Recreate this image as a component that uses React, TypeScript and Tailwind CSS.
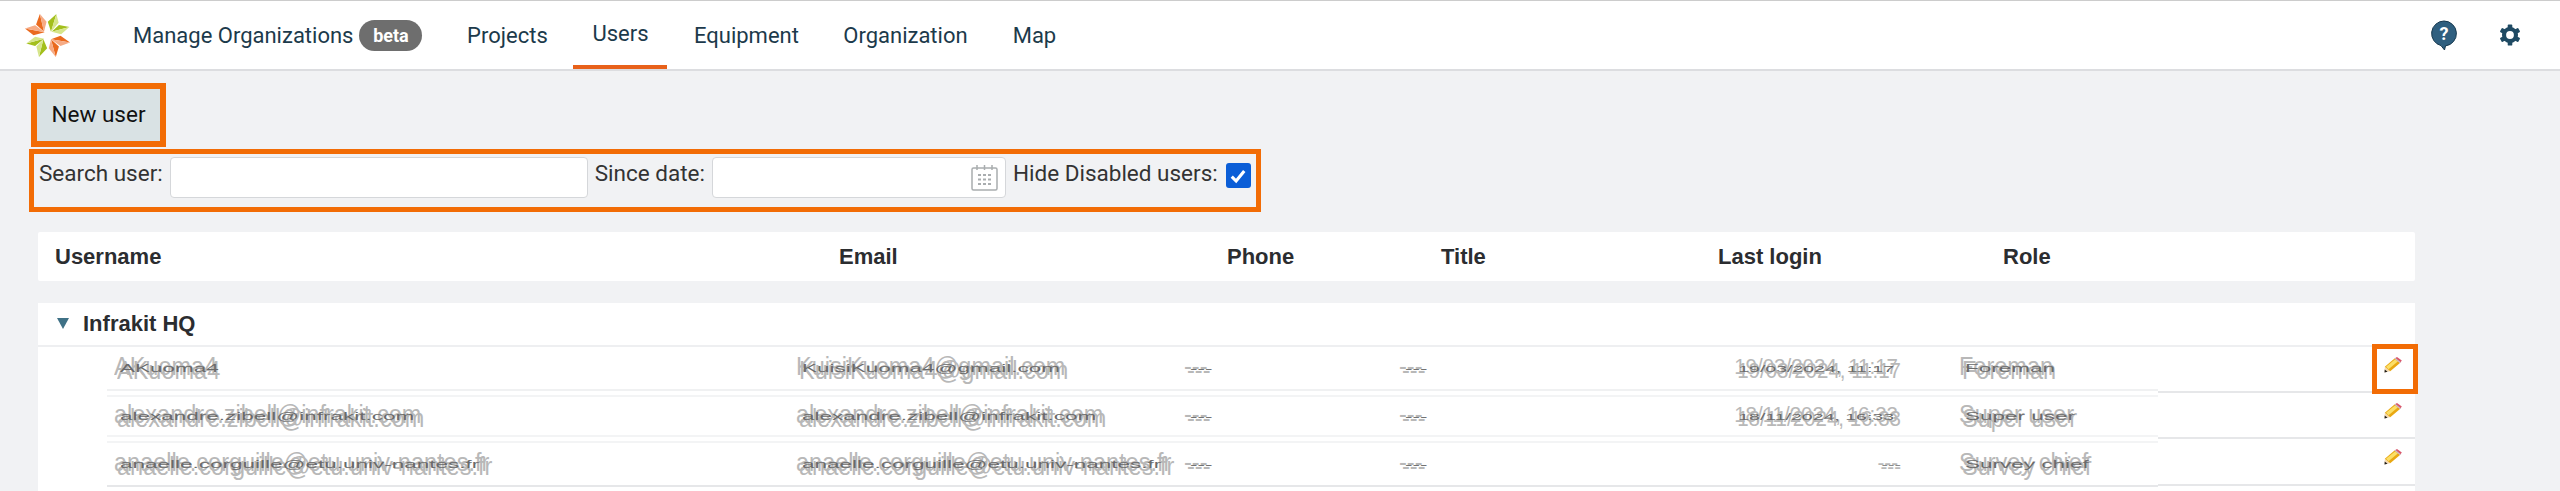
import React from 'react';

const petals = [
  // orange
  { apex: '120,47', inner: '133,103', dark: '108,80', light: '141,72', a: '#ea6a1f', b: '#f6ab85' },
  { apex: '73,93', inner: '135,105', dark: '100,114', light: '105,83', a: '#ea6a1f', b: '#f6ab85' },
  { apex: '170,183', inner: '155,127', dark: '180,150', light: '148,155', a: '#ea6a1f', b: '#f6ab85' },
  { apex: '215,137', inner: '155,127', dark: '185,116', light: '185,148', a: '#ea6a1f', b: '#f6ab85' },
  // green
  { apex: '172,47', inner: '155,103', dark: '145,72', light: '179,75', a: '#a3bf1c', b: '#d6e58a' },
  { apex: '213,88', inner: '157,103', dark: '180,82', light: '187,111', a: '#a3bf1c', b: '#d6e58a' },
  { apex: '77,140', inner: '133,125', dark: '105,148', light: '105,119', a: '#a3bf1c', b: '#d6e58a' },
  { apex: '117,183', inner: '131,127', dark: '143,155', light: '109,150', a: '#a3bf1c', b: '#d6e58a' },
];

const Logo = () => (
  <svg viewBox="70 44 148 142" className="w-[47px] h-[47px]">
    {petals.map((p, i) => (
      <g key={i}>
        <polygon points={`${p.apex} ${p.inner} ${p.dark}`} fill={p.a} />
        <polygon points={`${p.apex} ${p.inner} ${p.light}`} fill={p.b} />
      </g>
    ))}
  </svg>
);

const HelpIcon = () => (
  <svg viewBox="0 0 26 30" className="w-[26px] h-[30px]">
    <path d="M13 1a12.5 12.5 0 0 0-3 24.6L13.500 30l1-4.100A12.500 12.500 0 0 0 13 1z" fill="#2f5f7f" stroke="#16384e" strokeWidth="1" />
    <text x="13" y="20" textAnchor="middle" fill="#fff" fontSize="18" fontWeight="700" fontFamily="Roboto, sans-serif">?</text>
  </svg>
);

const GearIcon = () => (
  <svg viewBox="0 0 24 24" className="w-[22px] h-[22px]">
    <circle cx="12" cy="12" r="6.500" fill="none" stroke="#1f4a63" strokeWidth="4.500" />
    {[0, 60, 120, 180, 240, 300].map((r) => (
      <rect key={r} x="9.500" y="0.500" width="5" height="5" rx="1" fill="#1f4a63" transform={`rotate(${r} 12 12)`} />
    ))}
  </svg>
);

const Pencil = () => (
  <svg viewBox="0 0 18 16" className="w-[18px] h-[16px]">
    <polygon points="0.500,15.500 0.800,9.800 6.200,14.200" fill="#f4d9b0" />
    <polygon points="0.500,15.500 0.700,12.500 3.500,14.800" fill="#1d1d1d" />
    <polygon points="0.800,9.800 10.500,1.500 16,6 6.200,14.200" fill="#e9a812" />
    <polygon points="2,9.800 11.300,2.200 14,4.300 4.500,12.200" fill="#fbdf68" />
    <polygon points="10.500,1.500 13,0 17.800,3.500 16,6" fill="#d9566b" />
    <polygon points="10.500,1.500 11.500,0.900 16.800,5.200 16,6" fill="#c9c9c9" />
  </svg>
);

const CalendarIcon = () => (
  <svg viewBox="0 0 27 27" className="w-[27px] h-[27px]" fill="none" stroke="#a9adaf">
    <rect x="1" y="4" width="25" height="22" rx="1.500" strokeWidth="1.500" />
    <path d="M6 1v5M13.500 1v5M21 1v5" strokeWidth="1.500" />
    <path d="M7 11h3M12 11h3M17 11h3M7 15.500h3M12 15.500h3M17 15.500h3M7 20h3M12 20h3M17 20h3" strokeWidth="2" />
  </svg>
);

// the source shot has these values scrambled: two pale copies and a dark squashed one on top
const Scrambled = ({ text, narrow }: { text: string; narrow?: boolean }) => (
  <span className={narrow
    ? "relative inline-block whitespace-nowrap font-['Liberation_Sans',sans-serif] text-[20.500px] leading-[24px] text-[#b8b8b8]"
    : "relative inline-block whitespace-nowrap font-['Liberation_Sans',sans-serif] text-[23.500px] leading-[24px] text-[#b8b8b8]"}>
    <span className="relative -top-[1px] inline-block scale-y-[1.1]">{text}</span>
    <span aria-hidden className="absolute left-[3px] top-[3px] scale-y-[1.1]">{text}</span>
    <span aria-hidden className={narrow
      ? "absolute left-[4px] top-[1px] text-[#6a6a6a] text-[19.500px] scale-y-[0.5] origin-center"
      : "absolute left-[6px] top-[1px] text-[#6a6a6a] text-[22.500px] scale-y-[0.5] origin-center"}>{text}</span>
  </span>
);

const columns = [
  { label: 'Username', width: 'w-[784px]' },
  { label: 'Email', width: 'w-[388px]' },
  { label: 'Phone', width: 'w-[214px]' },
  { label: 'Title', width: 'w-[277px]' },
  { label: 'Last login', width: 'w-[285px]' },
  { label: 'Role', width: 'w-[60px]' },
];

const users = [
  { name: 'AKuoma4', email: 'KuisiKuoma4@gmail.com', login: '19/03/2024, 11:17', role: 'Foreman', left: 'h-[44px] border-b-2 border-[#f0f1f2]', right: 'h-[46px]' },
  { name: 'alexandre.zibell@infrakit.com', email: 'alexandre.zibell@infrakit.com', login: '18/11/2024, 16:33', role: 'Super user', left: 'mt-[4px] h-[42px] border-y-2 border-[#f3f4f5]', right: 'h-[46px]' },
  { name: 'anaelle.corguille@etu.univ-nantes.fr', email: 'anaelle.corguille@etu.univ-nantes.fr', login: '---', role: 'Survey chief', left: 'mt-[4px] h-[46px] border-y-2 border-t-[#f3f4f5] border-b-[#e6e7e9]', right: 'h-[47px]' },
];

const navItems = [
  { label: 'Projects', width: 'w-[132px]' },
  { label: 'Users', width: 'w-[94px] border-b-4 border-[#e8611a] -mb-[2px]' },
  { label: 'Equipment', width: 'w-[158px]' },
  { label: 'Organization', width: 'w-[160px]' },
  { label: 'Map', width: 'w-[98px]' },
];

const App = () => {
  return (
    <div className="h-[491px] overflow-hidden bg-[#f1f2f4] font-['Roboto',sans-serif] text-[#333]">
      {/* Top navigation */}
      <header className="h-[71px] bg-white border-t border-[#ccc] border-b-2 border-b-[#dcdde0] flex items-center pl-[24px] pr-[39px]">
        <Logo />
        <nav className="flex items-center h-full ml-[62px] text-[22px] text-[#1c3a4b]">
          <span>Manage Organizations</span>
          <span className="ml-[6px] h-[31px] w-[63px] rounded-full bg-[#6e6e6e] text-white text-[18px] font-bold flex items-center justify-center">beta</span>
          <div className="flex h-full ml-[19px]">
            {navItems.map((item) => (
              <a key={item.label} className={`h-full flex items-center justify-center ${item.width}`}>
                {item.label}
              </a>
            ))}
          </div>
        </nav>
        <div className="ml-auto flex items-center gap-[42px]">
          <HelpIcon />
          <GearIcon />
        </div>
      </header>

      <main className="pl-[29px] pt-[12px]">
        <div className="ml-[2px] w-[135px] h-[64px] border-[6px] border-[#f26c05] bg-white">
          <button className="w-full h-full bg-[#d9e2e4] text-[#111] text-[22.500px]">New user</button>
        </div>

        <div className="mt-[2px] w-[1232px] h-[63px] border-[5px] border-[#f26c05] flex items-start pt-[3px] pl-[5px] text-[22.500px]">
          <label className="flex items-start">
            <span className="leading-[33px]">Search user:</span>
            <input className="ml-[7px] w-[418px] h-[41px] bg-white rounded-[4px] border border-[#d5d7da]" />
          </label>
          <label className="flex items-start ml-[7px]">
            <span className="leading-[33px]">Since date:</span>
            <div className="ml-[7px] w-[294px] h-[41px] bg-white rounded-[4px] border border-[#d5d7da] flex items-center justify-end pr-[7px]">
              <CalendarIcon />
            </div>
          </label>
          <label className="flex items-start ml-[7px]">
            <span className="leading-[33px]">Hide Disabled users:</span>
            <span className="ml-[8px] mt-[6px] w-[25px] h-[25px] rounded-[3px] bg-[#0b5ed7] flex items-center justify-center">
              <svg viewBox="0 0 16 16" className="w-[20px] h-[20px]" fill="none" stroke="#fff" strokeWidth="2.500">
                <path d="M3 8.500l3.500 3.500L13 4" />
              </svg>
            </span>
          </label>
        </div>

        {/* Users table */}
        <div className="ml-[9px] mt-[20px] w-[2377px]">
          <div className="h-[49px] bg-white rounded-[2px] flex items-center pl-[17px] font-['Liberation_Sans',sans-serif] text-[22px] font-bold text-[#2b2d30]">
            {columns.map((c) => (
              <div key={c.label} className={c.width}>{c.label}</div>
            ))}
          </div>

          <div className="mt-[22px] bg-white pb-[5px]">
            <div className="h-[44px] border-b-2 border-[#eeeff1] flex items-center pl-[19px] font-['Liberation_Sans',sans-serif] text-[22px] font-bold text-[#2b2d30]">
              <span className="w-0 h-0 border-l-[6px] border-r-[6px] border-t-[11px] border-l-transparent border-r-transparent border-t-[#3f7186] -mt-[2px]" />
              <span className="ml-[14px] -mt-[2px]">Infrakit HQ</span>
            </div>

            <div className="flex">
              <div className="ml-[69px] w-[2051px]">
                {users.map((u) => (
                  <div key={u.email} className={`flex items-center pl-[7px] ${u.left}`}>
                    <div className="w-[682px]"><Scrambled text={u.name} /></div>
                    <div className="w-[388px]"><Scrambled text={u.email} /></div>
                    <div className="w-[215px]"><Scrambled text="---" /></div>
                    <div className="w-[331px]"><Scrambled text="---" /></div>
                    <div className="w-[168px] text-right"><Scrambled text={u.login} narrow /></div>
                    <div className="ml-[61px]"><Scrambled text={u.role} /></div>
                  </div>
                ))}
              </div>
              <div className="flex-1">
                {users.map((u) => (
                  <div key={u.email} className={`border-b-2 border-[#e6e7e9] flex justify-end pr-[13px] pt-[10px] ${u.right}`}>
                    <Pencil />
                  </div>
                ))}
              </div>
            </div>
          </div>
        </div>
      </main>

      {/* highlight around the first edit pencil */}
      <div className="absolute left-[2372px] top-[344px] w-[46px] h-[50px] border-[5px] border-[#f26c05]" />
    </div>
  );
};

export default App;
